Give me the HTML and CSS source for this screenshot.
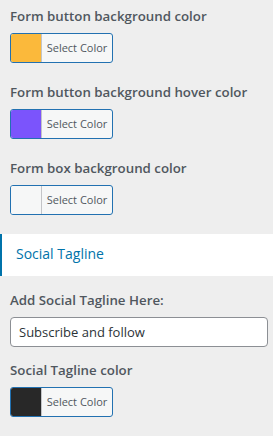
FILE: index.html
```html
<!DOCTYPE html>
<html>
    <head>
        <meta charset="utf-8">
        <title>Customizer</title>
        <link rel="stylesheet" href="styles.css">
    </head>
    <body>
        <div class="controls">
            <div class="field">
                <span class="field-label">Form button background color</span>
                <button class="color-btn"><span class="swatch swatch-yellow"></span><span class="btn-text">Select Color</span></button>
            </div>
            <div class="field">
                <span class="field-label">Form button background hover color</span>
                <button class="color-btn"><span class="swatch swatch-purple"></span><span class="btn-text">Select Color</span></button>
            </div>
            <div class="field">
                <span class="field-label">Form box background color</span>
                <button class="color-btn"><span class="swatch swatch-light"></span><span class="btn-text">Select Color</span></button>
            </div>
        </div>
        <div class="section-title">Social Tagline</div>
        <div class="controls controls-after">
            <div class="field field-text">
                <span class="field-label">Add Social Tagline Here:</span>
                <input class="text-input" type="text" value="Subscribe and follow">
            </div>
            <div class="field">
                <span class="field-label">Social Tagline color</span>
                <button class="color-btn"><span class="swatch swatch-dark"></span><span class="btn-text">Select Color</span></button>
            </div>
        </div>
    </body>
</html>
```

FILE: styles.css
```css
body{
    margin:0;
    background:#eeeeee;
    font-family:"Open Sans","Noto Sans",sans-serif;
    color:#50575e;
}

.controls{
    padding:6px 10px 0;
}
.controls-after{
    padding-top:14px;
}

.field{
    margin-bottom:19px;
}
.field-text{
    margin-bottom:13px;
}
.field-label{
    display:block;
    font-size:13.3px;
    font-weight:600;
    line-height:20px;
    margin-bottom:7px;
}

.color-btn{
    display:flex;
    width:103px;
    height:30px;
    padding:0;
    border:1px solid #2271b1;
    border-radius:3px;
    background:#f6f7f7;
    overflow:hidden;
    cursor:pointer;
    font-family:inherit;
}
.swatch{
    width:30px;
    height:100%;
    border-right:1px solid #c3c4c7;
}
.swatch-yellow{ background:#fbb93b; }
.swatch-purple{ background:#7b54fc; }
.swatch-light{ background:#f6f7f7; }
.swatch-dark{ background:#282828; }
.btn-text{
    flex:1;
    font-size:11px;
    line-height:28px;
    color:#50575e;
    text-align:center;
}

.section-title{
    background:#fff;
    border-left:2px solid #0073aa;
    padding:10px 14px 12px;
    font-size:14px;
    line-height:20px;
    font-weight:500;
    color:#0073aa;
}

.text-input{
    display:block;
    box-sizing:border-box;
    width:258px;
    height:30px;
    margin:0;
    padding:0 8px;
    border:1px solid #8c8f94;
    border-radius:4px;
    background:#fff;
    font-family:inherit;
    font-size:13px;
    color:#2c3338;
}
```
